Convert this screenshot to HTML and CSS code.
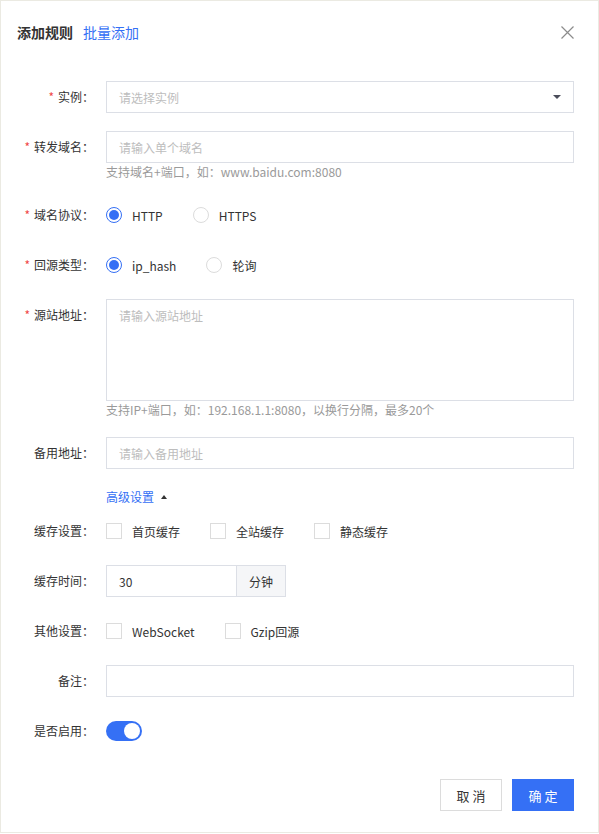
FILE: index.html
```html
<!DOCTYPE html>
<html lang="zh-CN">
<head>
<meta charset="utf-8">
<title>添加规则</title>
<link rel="stylesheet" href="styles.css">
</head>
<body>
<div class="dialog">
  <div class="dialog-header">
    <span class="title">添加规则</span>
    <a class="title-link">批量添加</a>
    <span class="close">
      <svg width="13" height="13" viewBox="0 0 13 13"><path d="M0.5 0.5 L12.5 12.5 M12.5 0.5 L0.5 12.5" stroke="#8c8c8c" stroke-width="1.2" fill="none"/></svg>
    </span>
  </div>

  <form class="form">
    <div class="form-item">
      <label class="form-label required">实例：</label>
      <div class="control">
        <div class="select"><span class="placeholder">请选择实例</span><span class="caret"></span></div>
      </div>
    </div>

    <div class="form-item">
      <label class="form-label required">转发域名：</label>
      <div class="control">
        <input class="input" type="text" placeholder="请输入单个域名">
        <div class="help">支持域名+端口，如：www.baidu.com:8080</div>
      </div>
    </div>

    <div class="form-item">
      <label class="form-label required">域名协议：</label>
      <div class="control options">
        <span class="option"><span class="radio checked"></span>HTTP</span>
        <span class="option"><span class="radio"></span>HTTPS</span>
      </div>
    </div>

    <div class="form-item">
      <label class="form-label required">回源类型：</label>
      <div class="control options">
        <span class="option"><span class="radio checked"></span>ip_hash</span>
        <span class="option"><span class="radio"></span>轮询</span>
      </div>
    </div>

    <div class="form-item">
      <label class="form-label required">源站地址：</label>
      <div class="control">
        <textarea class="textarea" placeholder="请输入源站地址"></textarea>
        <div class="help">支持IP+端口，如：192.168.1.1:8080，以换行分隔，最多20个</div>
      </div>
    </div>

    <div class="form-item">
      <label class="form-label">备用地址：</label>
      <div class="control">
        <input class="input" type="text" placeholder="请输入备用地址">
      </div>
    </div>

    <div class="form-item link-row">
      <span class="form-label-empty"></span>
      <div class="control">
        <a class="advanced">高级设置<span class="up"></span></a>
      </div>
    </div>

    <div class="form-item">
      <label class="form-label">缓存设置：</label>
      <div class="control options">
        <span class="option"><span class="checkbox"></span>首页缓存</span>
        <span class="option"><span class="checkbox"></span>全站缓存</span>
        <span class="option"><span class="checkbox"></span>静态缓存</span>
      </div>
    </div>

    <div class="form-item">
      <label class="form-label">缓存时间：</label>
      <div class="control">
        <div class="input-group">
          <input class="input group-input" type="text" value="30">
          <span class="addon">分钟</span>
        </div>
      </div>
    </div>

    <div class="form-item">
      <label class="form-label">其他设置：</label>
      <div class="control options">
        <span class="option"><span class="checkbox"></span>WebSocket</span>
        <span class="option"><span class="checkbox"></span>Gzip回源</span>
      </div>
    </div>

    <div class="form-item">
      <label class="form-label">备注：</label>
      <div class="control">
        <input class="input" type="text">
      </div>
    </div>

    <div class="form-item">
      <label class="form-label">是否启用：</label>
      <div class="control options">
        <span class="switch on"></span>
      </div>
    </div>
  </form>

  <div class="dialog-footer">
    <button class="btn" type="button">取 消</button>
    <button class="btn btn-primary" type="button">确 定</button>
  </div>
</div>
</body>
</html>
```

FILE: styles.css
```css
* {
  box-sizing: border-box;
}

html,
body {
  margin: 0;
  background: #fff;
}

body {
  font-family: "Microsoft YaHei", "Noto Sans CJK SC", sans-serif;
  font-size: 12px;
  color: #333;
}

.dialog {
  width: 599px;
  height: 833px;
  border: 1px solid #ebeae2;
  background: #fff;
  display: flex;
  flex-direction: column;
}

.dialog-header {
  height: 62px;
  display: flex;
  align-items: center;
  padding: 0 24px 0 16px;
}

.title {
  font-size: 14px;
  font-weight: bold;
  color: #333;
}

.title-link {
  font-size: 14px;
  color: #3570f5;
  margin-left: 10px;
  cursor: pointer;
}

.close {
  margin-left: auto;
  width: 13px;
  height: 13px;
  display: flex;
}

.form {
  padding: 18px 24px 0 0;
  margin: 0;
}

.form-item {
  display: grid;
  grid-template-columns: 93px 1fr;
  column-gap: 12px;
  margin-bottom: 18px;
}

.form-label {
  text-align: right;
  line-height: 32px;
  color: #333;
  white-space: nowrap;
}

.form-label.required::before {
  content: "*";
  color: #f04848;
  margin-right: 4px;
}

.control {
  min-width: 0;
}

.select,
.input,
.textarea {
  display: flex;
  align-items: center;
  width: 100%;
  height: 32px;
  border: 1px solid #dcdfe6;
  border-radius: 0;
  padding: 0 12px;
  font-family: inherit;
  font-size: 12px;
  color: #333;
  background: #fff;
  outline: none;
}

.input::placeholder,
.textarea::placeholder,
.placeholder {
  color: #bdbdbd;
}

.caret {
  margin-left: auto;
  width: 0;
  height: 0;
  border-left: 4px solid transparent;
  border-right: 4px solid transparent;
  border-top: 4px solid #4a4d5a;
}

.textarea {
  display: block;
  height: 102px;
  padding: 7px 12px;
  line-height: 18px;
  resize: none;
}

.help {
  line-height: 18px;
  color: #9a9a9a;
}

.options {
  display: flex;
  align-items: center;
  height: 32px;
}

.option {
  display: flex;
  align-items: center;
  margin-right: 30px;
  color: #333;
}

.radio {
  position: relative;
  width: 16px;
  height: 16px;
  border: 1px solid #dcdcdc;
  border-radius: 50%;
  margin-right: 10px;
  background: #fff;
}

.radio.checked {
  border-color: #3570f5;
}

.radio.checked::after {
  content: "";
  position: absolute;
  left: 2px;
  top: 2px;
  width: 10px;
  height: 10px;
  border-radius: 50%;
  background: #3570f5;
}

.checkbox {
  width: 16px;
  height: 16px;
  border: 1px solid #dcdcdc;
  margin-right: 10px;
  background: #fff;
}

.link-row {
  margin-bottom: 8px;
}

.advanced {
  display: flex;
  align-items: center;
  line-height: 20px;
  color: #3570f5;
  cursor: pointer;
}

.up {
  margin-left: 7px;
  width: 0;
  height: 0;
  border-left: 3px solid transparent;
  border-right: 3px solid transparent;
  border-bottom: 4px solid #333;
}

.input-group {
  display: flex;
  width: 180px;
}

.group-input {
  width: 130px;
  flex: none;
  border-right: none;
}

.addon {
  width: 50px;
  height: 32px;
  display: flex;
  align-items: center;
  justify-content: center;
  border: 1px solid #dcdfe6;
  background: #f5f6f8;
  color: #333;
}

.switch {
  position: relative;
  width: 36px;
  height: 20px;
  border-radius: 10px;
  background: #dcdcdc;
}

.switch.on {
  background: #3570f5;
}

.switch::after {
  content: "";
  position: absolute;
  top: 2px;
  left: 2px;
  width: 16px;
  height: 16px;
  border-radius: 50%;
  background: #fff;
}

.switch.on::after {
  left: 18px;
}

.dialog-footer {
  display: flex;
  justify-content: flex-end;
  gap: 10px;
  padding: 14px 24px 0 0;
}

.btn {
  width: 62px;
  height: 32px;
  border: 1px solid #dcdcdc;
  background: #fff;
  color: #333;
  font-family: inherit;
  font-size: 13px;
  padding: 0;
  cursor: pointer;
}

.btn-primary {
  border-color: #3570f5;
  background: #3570f5;
  color: #fff;
}
```
